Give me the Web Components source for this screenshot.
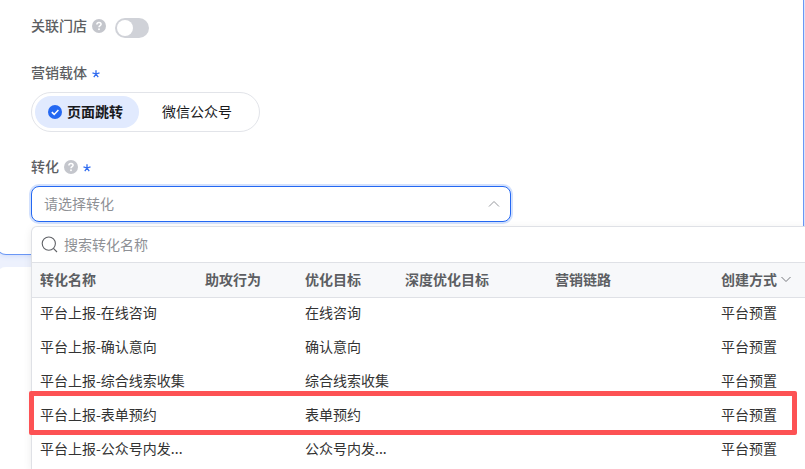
<!DOCTYPE html>
<html lang="zh-CN">
<head>
<meta charset="utf-8">
<title>营销设置</title>
<style>
  html, body { margin: 0; height: 100%; overflow: hidden; }
  body { background: #edf1fd; color: #333; font: 14px/22px "Noto Sans CJK SC", sans-serif; }
</style>
</head>
<body>
<marketing-page></marketing-page>
<script>
const base = `
  *, *::before { box-sizing: border-box; }
  button, input, select { font: inherit; color: inherit; margin: 0; }
  svg { display: block; flex: none; fill: none; }
  .label { display: flex; align-items: center; gap: 5px; height: 22px; color: #5c5e62; font-weight: 500; padding: 0; }
  .text { padding-bottom: 2px; }
`;
function define(name, html) {
  const template = document.createElement('template');
  template.innerHTML = html;
  customElements.define(name, class extends HTMLElement {
    constructor() {
      super();
      this.attachShadow({ mode: 'open' }).append(template.content.cloneNode(true));
    }
  });
}

define('help-icon', `<style>${base} :host { display: block; flex: none; }</style>
  <svg width="14" height="14" viewBox="0 0 14 14" aria-hidden="true"><circle cx="7" cy="7" r="7" fill="#c4c6cc"/><path d="M4.9 5.5C4.9 4.2 5.8 3.4 7 3.4S9.1 4.2 9.1 5.3C9.1 6.6 7 6.7 7 8.2" stroke="#fff" stroke-width="1.5"/><circle cx="7" cy="10.3" r=".95" fill="#fff"/></svg>`);

define('required-mark', `<style>${base} :host { display: block; flex: none; padding-top: 2px; }</style>
  <svg width="8" height="8" viewBox="0 0 8 8" aria-hidden="true"><path d="M4 4V.3M4 4L.5 2.9M4 4L7.5 2.9M4 4L1.8 7.2M4 4L6.2 7.2" stroke="#2f6bf0" stroke-width="1.3"/></svg>`);

define('form-card', `<style>${base}
  :host { display: block; box-sizing: border-box; margin: 0 1px 12px -4px; padding: 14px 32px 32px 34px; background: #fff; border: 1px solid #6a97f5; border-top: 0; border-radius: 0 0 10px 10px; box-shadow: 0 0 6px #c3d4fa; }
  :host([plain]) { flex: 1; margin-bottom: 0; border-color: #fff; border-radius: 10px 10px 0 0; box-shadow: none; }
  .stack { display: flex; flex-direction: column; gap: 24px; }
</style><div class="stack"><slot></slot></div>`);

define('store-toggle', `<style>${base}
  :host { display: flex; align-items: center; gap: 9px; }
  input { appearance: none; width: 34px; height: 20px; margin-top: 4px; border-radius: 10px; background: #d0d2d8; padding: 2px; display: flex; }
  input::before { content: ""; width: 16px; height: 16px; border-radius: 50%; background: #fff; }
  input:checked { background: #2468f2; justify-content: flex-end; }
</style><label class="label" for="store"><span class="text"><slot></slot></span><help-icon></help-icon></label><input id="store" type="checkbox" role="switch">`);

define('carrier-group', `<style>${base}
  :host { display: block; }
  fieldset { border: 0; margin: 0; padding: 0; min-width: 0; display: flex; flex-direction: column; align-items: flex-start; gap: 8px; }
  legend { float: left; }
  .options { display: flex; border: 1px solid #e2e4e9; border-radius: 20px; padding: 3px; }
  .option { display: flex; align-items: center; gap: 5px; height: 32px; border-radius: 16px; padding: 0 24px 0 23px; color: #18191c; }
  .option input { position: absolute; opacity: 0; pointer-events: none; }
  .option svg { display: none; }
  .option:has(:checked) { background: #e1eafe; font-weight: 700; padding: 0 16px 0 13px; }
  .option:has(:checked) svg { display: block; }
</style>
<fieldset><legend class="label"><span class="text"><slot></slot></span><required-mark></required-mark></legend>
  <div class="options">
    <label class="option"><input type="radio" name="carrier" checked><svg width="14" height="14" viewBox="0 0 14 14"><circle cx="7" cy="7" r="7" fill="#2468f2"/><path d="M3.8 7.1L6.2 9.4L10.4 5.1" stroke="#fff" stroke-width="1.5"/></svg><span class="text">页面跳转</span></label>
    <label class="option"><input type="radio" name="carrier"><span class="text">微信公众号</span></label>
  </div>
</fieldset>`);

define('conversion-select', `<style>${base}
  :host { display: flex; flex-direction: column; gap: 8px; position: relative; }
  .box { display: grid; align-items: center; max-width: 480px; }
  select, .box svg { grid-area: 1 / 1; }
  select { appearance: none; width: 100%; height: 36px; padding: 0 36px 2px 12px; border: 1px solid #2468f2; border-radius: 8px; background: #fff; color: #8e9095; outline: 0; box-shadow: 0 0 0 2px #d3e1fd; }
  .box svg { justify-self: end; margin-right: 11px; pointer-events: none; }
  .panel { position: absolute; z-index: 2; top: calc(100% + 4px); left: 0; width: calc(100% + 48px); }
</style>
<label class="label" for="conversion"><span class="text">转化</span><help-icon></help-icon><required-mark></required-mark></label>
<div class="box"><select id="conversion"><option>请选择转化</option></select>
<svg width="12" height="8" viewBox="0 0 12 8" aria-hidden="true"><path d="M1 6.5L6 1.5L11 6.5" stroke="#96989d"/></svg></div>
<div class="panel"><slot></slot></div>`);

const rows = [
  ['平台上报-在线咨询', '在线咨询'],
  ['平台上报-确认意向', '确认意向'],
  ['平台上报-综合线索收集', '综合线索收集'],
  ['平台上报-表单预约', '表单预约', true],
  ['平台上报-公众号内发...', '公众号内发...']
];
define('conversion-panel', `<style>${base}
  :host { display: block; background: #fff; border: 1px solid #dfe1e6; border-bottom: 0; border-radius: 6px 6px 0 0; box-shadow: 0 2px 8px #00000014; padding-bottom: 1px; }
  .search { display: flex; align-items: center; gap: 6px; height: 35px; padding: 0 9px; }
  .search input { flex: 1; min-width: 0; border: 0; outline: 0; background: none; padding: 0 0 2px; }
  .search input::placeholder { color: #8e9095; opacity: 1; }
  table { width: 100%; table-layout: fixed; border-collapse: separate; border-spacing: 0; }
  th, td { text-align: left; padding: 0 8px; white-space: nowrap; }
  th { height: 36px; padding-bottom: 2px; background: #f7f8fa; border: solid #dfe1e6; border-width: 1px 0; color: #5c5e62; font-weight: 700; }
  td { height: 34px; padding-bottom: 6px; }
  th button { display: flex; align-items: center; gap: 3px; border: 0; padding: 0; background: none; }
  tr.marked { position: relative; }
  .marked td:first-child::before { content: ""; position: absolute; inset: -9px auto -1px -3px; width: calc(100% - 18px); border: 5px solid #fd5254; border-radius: 2px; pointer-events: none; }
  .name { width: 165px } .short { width: 100px } .deep { width: 150px } .link { width: 166px }
</style>
<div class="search"><svg width="17" height="17" viewBox="0 0 17 17" aria-hidden="true"><circle cx="7.8" cy="7.6" r="6.6" stroke="#606267" stroke-width="1.1"/><path d="M12.4 12.4L16 16" stroke="#606267" stroke-width="1.1"/></svg><input type="search" placeholder="搜索转化名称" aria-label="搜索转化名称"></div>
<table><colgroup><col class="name"><col class="short"><col class="short"><col class="deep"><col class="link"><col></colgroup>
<thead><tr><th>转化名称</th><th>助攻行为</th><th>优化目标</th><th>深度优化目标</th><th>营销链路</th><th><button type="button">创建方式<svg width="12" height="8" viewBox="0 0 12 8" aria-hidden="true"><path d="M1.5 2L6 6.5L10.5 2" stroke="#77797e"/></svg></button></th></tr></thead>
<tbody>${rows.map(([n, g, m]) => `<tr${m ? ' class="marked"' : ''}><td>${n}</td><td></td><td>${g}</td><td></td><td></td><td>平台预置</td></tr>`).join('')}</tbody></table>`);

define('marketing-page', `<style>:host { display: flex; flex-direction: column; height: 100%; }</style>
<form-card>
  <store-toggle>关联门店</store-toggle>
  <carrier-group>营销载体</carrier-group>
  <conversion-select><conversion-panel></conversion-panel></conversion-select>
</form-card>
<form-card plain></form-card>`);
</script>
</body>
</html>
